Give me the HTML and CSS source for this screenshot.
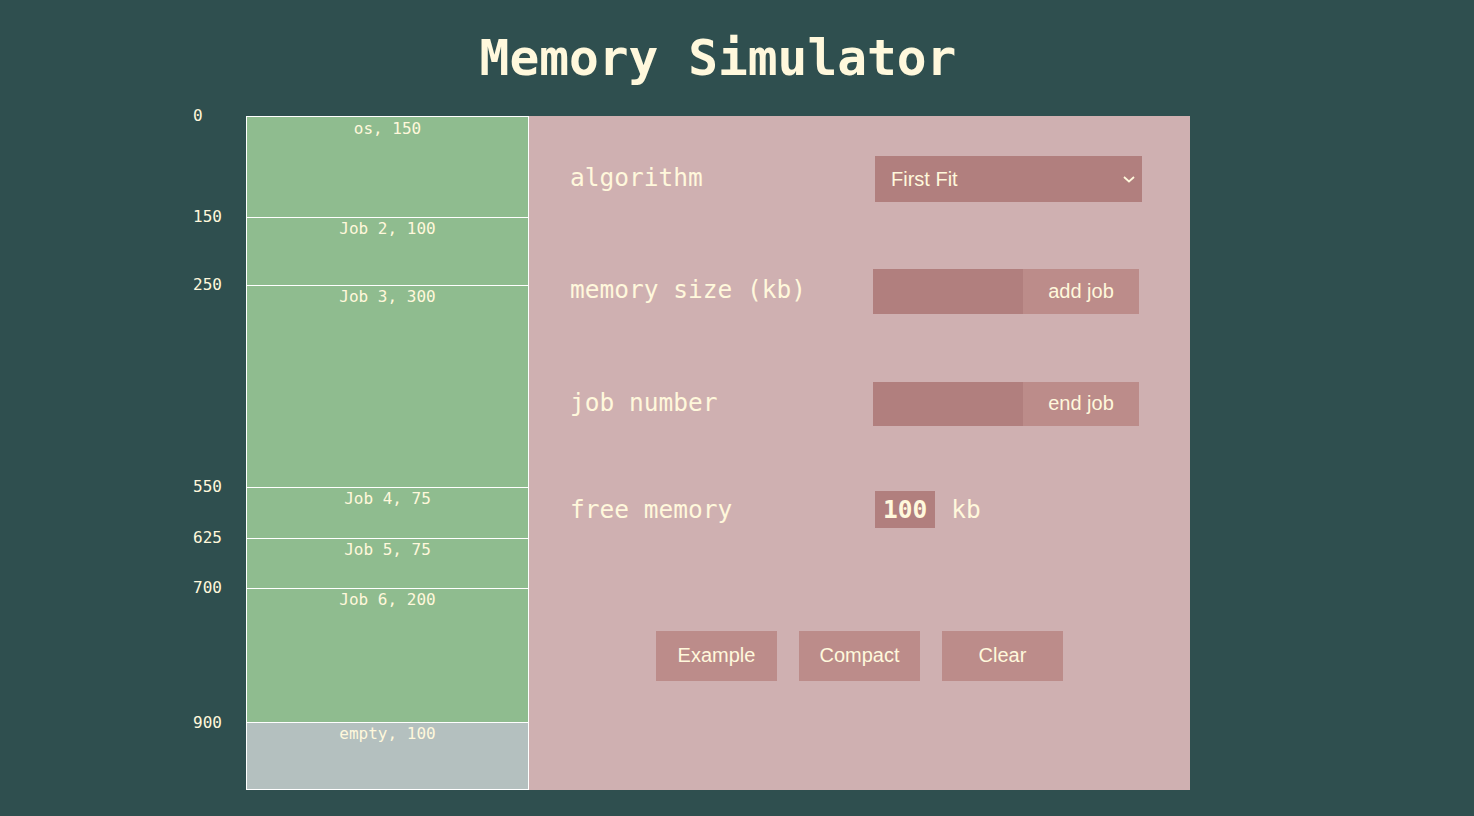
FILE: index.html
```html
<!DOCTYPE html>
<html>
<head>
<meta charset="utf-8">
<title>Memory Simulator</title>
<link rel="stylesheet" href="styles.css">
</head>
<body>
<div class="page">
  <h1 class="title">Memory Simulator</h1>
  <div class="main">
    <div class="axis">
      <span class="addr" style="top:0px">0</span>
      <span class="addr" style="top:101px">150</span>
      <span class="addr" style="top:169px">250</span>
      <span class="addr" style="top:371px">550</span>
      <span class="addr" style="top:422px">625</span>
      <span class="addr" style="top:472px">700</span>
      <span class="addr" style="top:607px">900</span>
    </div>
    <div class="memory">
      <div class="block job" style="height:100px">os, 150</div>
      <div class="block job" style="height:68px">Job 2, 100</div>
      <div class="block job" style="height:202px">Job 3, 300</div>
      <div class="block job" style="height:51px">Job 4, 75</div>
      <div class="block job" style="height:50px">Job 5, 75</div>
      <div class="block job" style="height:134px">Job 6, 200</div>
      <div class="block empty" style="height:67px">empty, 100</div>
    </div>
    <div class="panel">
      <div class="row row-algo">
        <span class="label">algorithm</span>
        <div class="select-wrap">
          <select class="select">
            <option>First Fit</option>
            <option>Best Fit</option>
            <option>Worst Fit</option>
          </select>
          <svg class="chevron" width="12" height="7" viewBox="0 0 12 7"><path d="M1 1 L6 5.5 L11 1" fill="none" stroke="#fff8dc" stroke-width="1.8"/></svg>
        </div>
      </div>
      <div class="row row-size">
        <span class="label">memory size (kb)</span>
        <div class="combo">
          <input class="field" type="text">
          <button class="btn-side">add job</button>
        </div>
      </div>
      <div class="row row-job">
        <span class="label">job number</span>
        <div class="combo">
          <input class="field" type="text">
          <button class="btn-side">end job</button>
        </div>
      </div>
      <div class="row row-free">
        <span class="label label-free">free memory</span>
        <div class="free">
          <span class="free-val">100</span>
          <span class="free-unit">kb</span>
        </div>
      </div>
      <div class="actions">
        <button class="btn">Example</button>
        <button class="btn">Compact</button>
        <button class="btn">Clear</button>
      </div>
    </div>
  </div>
</div>
</body>
</html>
```

FILE: styles.css
```css
* { box-sizing: border-box; }
html, body { margin: 0; padding: 0; }
body {
  background: #2f4f4f;
  color: #fff8dc;
  font-family: "DejaVu Sans Mono", "Liberation Mono", monospace;
  width: 1474px;
  height: 816px;
  overflow: hidden;
}
.page {
  padding-left: 193px;
}
.title {
  margin: 30px 0 0 53px;
  width: 944px;
  text-align: center;
  font-size: 49.5px;
  font-weight: bold;
  line-height: 57px;
  height: 57px;
}
.main {
  display: flex;
  margin-top: 29px;
}
.axis {
  position: relative;
  width: 53px;
  height: 674px;
}
.addr {
  position: absolute;
  left: 0;
  font-size: 16px;
  line-height: 18px;
  transform: translateY(-50%);
}
.memory {
  width: 283px;
  height: 674px;
  border: 1px solid #ffffff;
  display: flex;
  flex-direction: column;
}
.block {
  flex: none;
  text-align: center;
  font-size: 16px;
  line-height: 18px;
  padding-top: 2px;
  border-top: 1px solid #ffffff;
}
.block:first-child { border-top: none; padding-top: 3px; }
.job { background: #8fbc8f; }
.empty { background: #b4c0bf; }

.panel {
  width: 661px;
  height: 674px;
  background: #cfb0b1;
  padding: 40px 0 0 41px;
  display: flex;
  flex-direction: column;
}
.row {
  display: grid;
  grid-template-columns: 303px auto;
  align-items: center;
}
.label {
  font-size: 24.5px;
  line-height: 30px;
  margin-top: -3px;
}
.label-free { margin-top: 0; }
.row-algo { height: 46px; }
.row-size { height: 45px; margin-top: 67px; }
.row-job { height: 44px; margin-top: 68px; }
.row-free { height: 37px; margin-top: 65px; }

.select-wrap {
  position: relative;
  margin-left: 2px;
  width: 267px;
  height: 46px;
}
.select {
  appearance: none;
  -webkit-appearance: none;
  width: 267px;
  height: 46px;
  border: none;
  outline: none;
  border-radius: 0;
  background: #b17f7e;
  color: #fff8dc;
  font-family: "Liberation Sans", Arial, sans-serif;
  font-size: 20px;
  padding: 0 0 0 16px;
}
.chevron {
  position: absolute;
  right: 7px;
  top: 20px;
  pointer-events: none;
}
.combo {
  display: flex;
  height: 45px;
}
.row-job .combo { height: 44px; }
.field {
  width: 150px;
  height: 100%;
  border: none;
  outline: none;
  border-radius: 0;
  background: #b17f7e;
  margin: 0;
  padding: 0 8px;
  color: #fff8dc;
  font-size: 20px;
}
.btn-side, .btn {
  border: none;
  border-radius: 0;
  background: #bc8c8a;
  color: #fff8dc;
  font-family: "Liberation Sans", Arial, sans-serif;
  font-size: 20px;
  padding: 0;
  margin: 0;
}
.btn-side {
  width: 116px;
  height: 100%;
  padding-bottom: 1px;
}
.free {
  display: flex;
  align-items: center;
  margin-left: 2px;
  gap: 16px;
}
.free-val {
  background: #b17f7e;
  height: 37px;
  padding: 0 8px;
  font-size: 24.5px;
  font-weight: bold;
  line-height: 37px;
}
.free-unit {
  font-size: 24.5px;
  line-height: 37px;
}
.actions {
  display: flex;
  justify-content: center;
  gap: 22px;
  margin-top: 103px;
  margin-left: -41px;
}
.btn {
  width: 121px;
  height: 50px;
  padding-bottom: 2px;
}
```
